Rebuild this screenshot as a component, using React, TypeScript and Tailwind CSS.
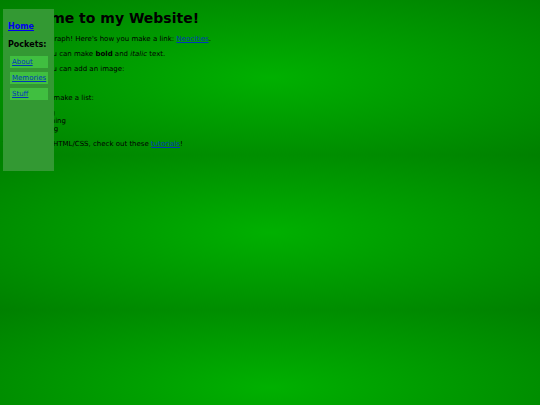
const pockets = ["About", "Memories", "Stuff"];

function Sidebar() {
  return (
    <nav className="absolute left-[3px] top-[9px] h-[162px] w-[51px] bg-[#339933] px-[5px] pt-[13px]">
      <h3 className="text-[8px] leading-[10px] font-bold">
        <a href="#home" className="text-[#0000ee] underline">Home</a>
      </h3>
      <h3 className="mt-2 text-[8px] leading-[10px] font-bold">Pockets:</h3>
      <ul className="mt-[6px] ml-[2px] flex w-[38px] flex-col gap-1">
        {pockets.map((name) => (
          <li key={name} className="h-3 bg-[#40bf40] px-[2px] leading-3">
            <a href={"#" + name.toLowerCase()} className="text-[#0038b8] underline">{name}</a>
          </li>
        ))}
      </ul>
    </nav>
  );
}

export default function App() {
  return (
    <div className="relative min-h-screen bg-[radial-gradient(#00b000,#008000)] bg-[length:100%_155px] px-[3px] pt-[10px] font-['DejaVu_Sans',Verdana,sans-serif] text-[7px] leading-[8px] text-black">
      <main className="flex flex-col gap-[7px]">
        <h1 className="mb-px text-[14px] leading-[17px] font-bold">Welcome to my Website!</h1>
        <p>
          This is a paragraph! Here's how you make a link: <a href="#neocities" className="text-[#0038b8] underline">Neocities</a>.
        </p>
        <p>Here's how you can make <strong>bold</strong> and <em>italic</em> text.</p>
        <p>Here's how you can add an image:</p>
        <div className="h-[7px]" />
        <p>Here's how to make a list:</p>
        <ul className="list-disc pl-[17px]">
          <li>First thing</li>
          <li>Second thing</li>
          <li>Third thing</li>
        </ul>
        <p>
          To learn more HTML/CSS, check out these <a href="#tutorials" className="text-[#0038b8] underline">tutorials</a>!
        </p>
      </main>
      <Sidebar />
    </div>
  );
}
